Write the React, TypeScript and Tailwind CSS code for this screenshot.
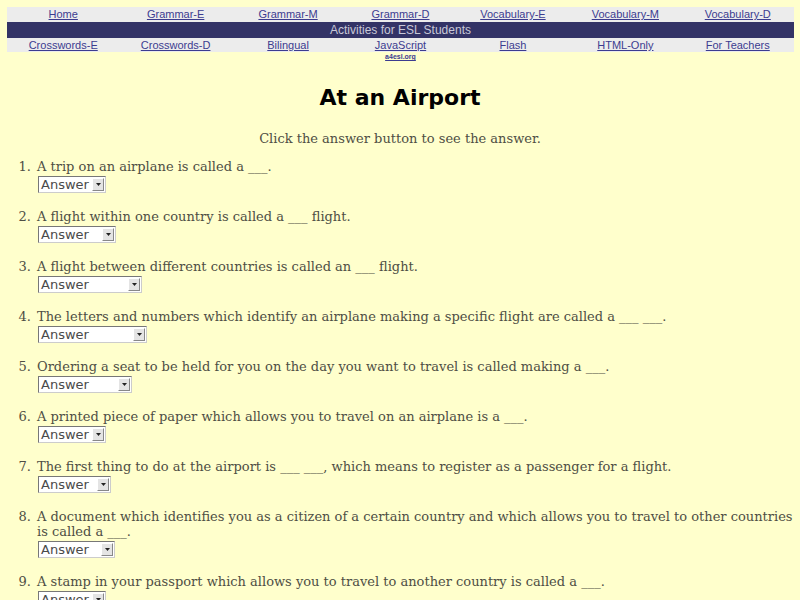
import React from "react";

const row1 = ["Home", "Grammar-E", "Grammar-M", "Grammar-D", "Vocabulary-E", "Vocabulary-M", "Vocabulary-D"];
const row3 = ["Crosswords-E", "Crosswords-D", "Bilingual", "JavaScript", "Flash", "HTML-Only", "For Teachers"];

const items: { text: string; w: number }[] = [
  { text: "A trip on an airplane is called a ___.", w: 68 },
  { text: "A flight within one country is called a ___ flight.", w: 78 },
  { text: "A flight between different countries is called an ___ flight.", w: 104 },
  { text: "The letters and numbers which identify an airplane making a specific flight are called a ___ ___.", w: 109 },
  { text: "Ordering a seat to be held for you on the day you want to travel is called making a ___.", w: 94 },
  { text: "A printed piece of paper which allows you to travel on an airplane is a ___.", w: 68 },
  { text: "The first thing to do at the airport is ___ ___, which means to register as a passenger for a flight.", w: 73 },
  { text: "A document which identifies you as a citizen of a certain country and which allows you to travel to other countries is called a ___.", w: 77 },
  { text: "A stamp in your passport which allows you to travel to another country is called a ___.", w: 68 },
];

function FakeSelect({ w }: { w: number }) {
  return (
    <div
      className="flex h-[17px] items-stretch border border-t-[#777] border-l-[#777] border-r-[#ccc] border-b-[#ccc] bg-white"
      style={{ width: w }}
    >
      <div className="flex-1 pl-[2px] text-[13px] leading-[15px] text-[#4a4a4a]" style={{ fontFamily: '"DejaVu Sans", sans-serif' }}>
        Answer
      </div>
      <div className="my-[1px] mr-[1px] flex w-[12px] items-center justify-center border border-t-[#fff] border-l-[#fff] border-r-[#888] border-b-[#888] bg-[#e4e4e4]">
        <svg width="5" height="3" viewBox="0 0 5 3">
          <path d="M0 0 H5 L2.5 3 Z" fill="#222" />
        </svg>
      </div>
    </div>
  );
}

export default function App() {
  return (
    <div className="min-h-[600px] w-[800px] bg-[#ffffcc] pt-[7px]" style={{ fontFamily: '"Liberation Sans", Arial, sans-serif' }}>
      <div className="mx-[7px] w-[787px]">
        <div className="grid h-[15px] grid-cols-7 bg-[#ececec]">
          {row1.map((t) => (
            <div key={t} className="text-center text-[11px] leading-[15px] text-[#3c3c90] underline">
              {t}
            </div>
          ))}
        </div>
        <div className="h-[16px] bg-[#333366] text-center text-[12px] leading-[16px] text-[#c8c8d8]">
          Activities for ESL Students
        </div>
        <div className="grid h-[14px] grid-cols-7 bg-[#ececec]">
          {row3.map((t) => (
            <div key={t} className="text-center text-[11px] leading-[14px] text-[#3c3c90] underline">
              {t}
            </div>
          ))}
        </div>
        <div className="grid grid-cols-7">
          <div />
          <div />
          <div />
          <div className="text-center text-[7px] font-bold leading-[10px] text-[#3c3c90] underline">a4esl.org</div>
        </div>
      </div>

      <h1
        className="mt-[21px] text-center text-[22px] font-bold leading-[30px] text-black"
        style={{ fontFamily: '"Comic Sans MS", "DejaVu Sans", sans-serif' }}
      >
        At an Airport
      </h1>

      <div style={{ fontFamily: '"DejaVu Serif", serif' }} className="text-[13px] text-[#4e4e44]">
        <p className="mt-[18px] text-center leading-[15px]">Click the answer button to see the answer.</p>
        <div className="mt-[13px] flex flex-col gap-[16px]">
          {items.map((it, i) => (
            <div key={i} className="flex">
              <div className="w-[31px] shrink-0 text-right leading-[15px]">{i + 1}.</div>
              <div className="ml-[6px] flex-1 pr-[3px]">
                <div className="leading-[15px]">{it.text}</div>
                <div className="ml-[1px] mt-[2px]">
                  <FakeSelect w={it.w} />
                </div>
              </div>
            </div>
          ))}
        </div>
      </div>
    </div>
  );
}
